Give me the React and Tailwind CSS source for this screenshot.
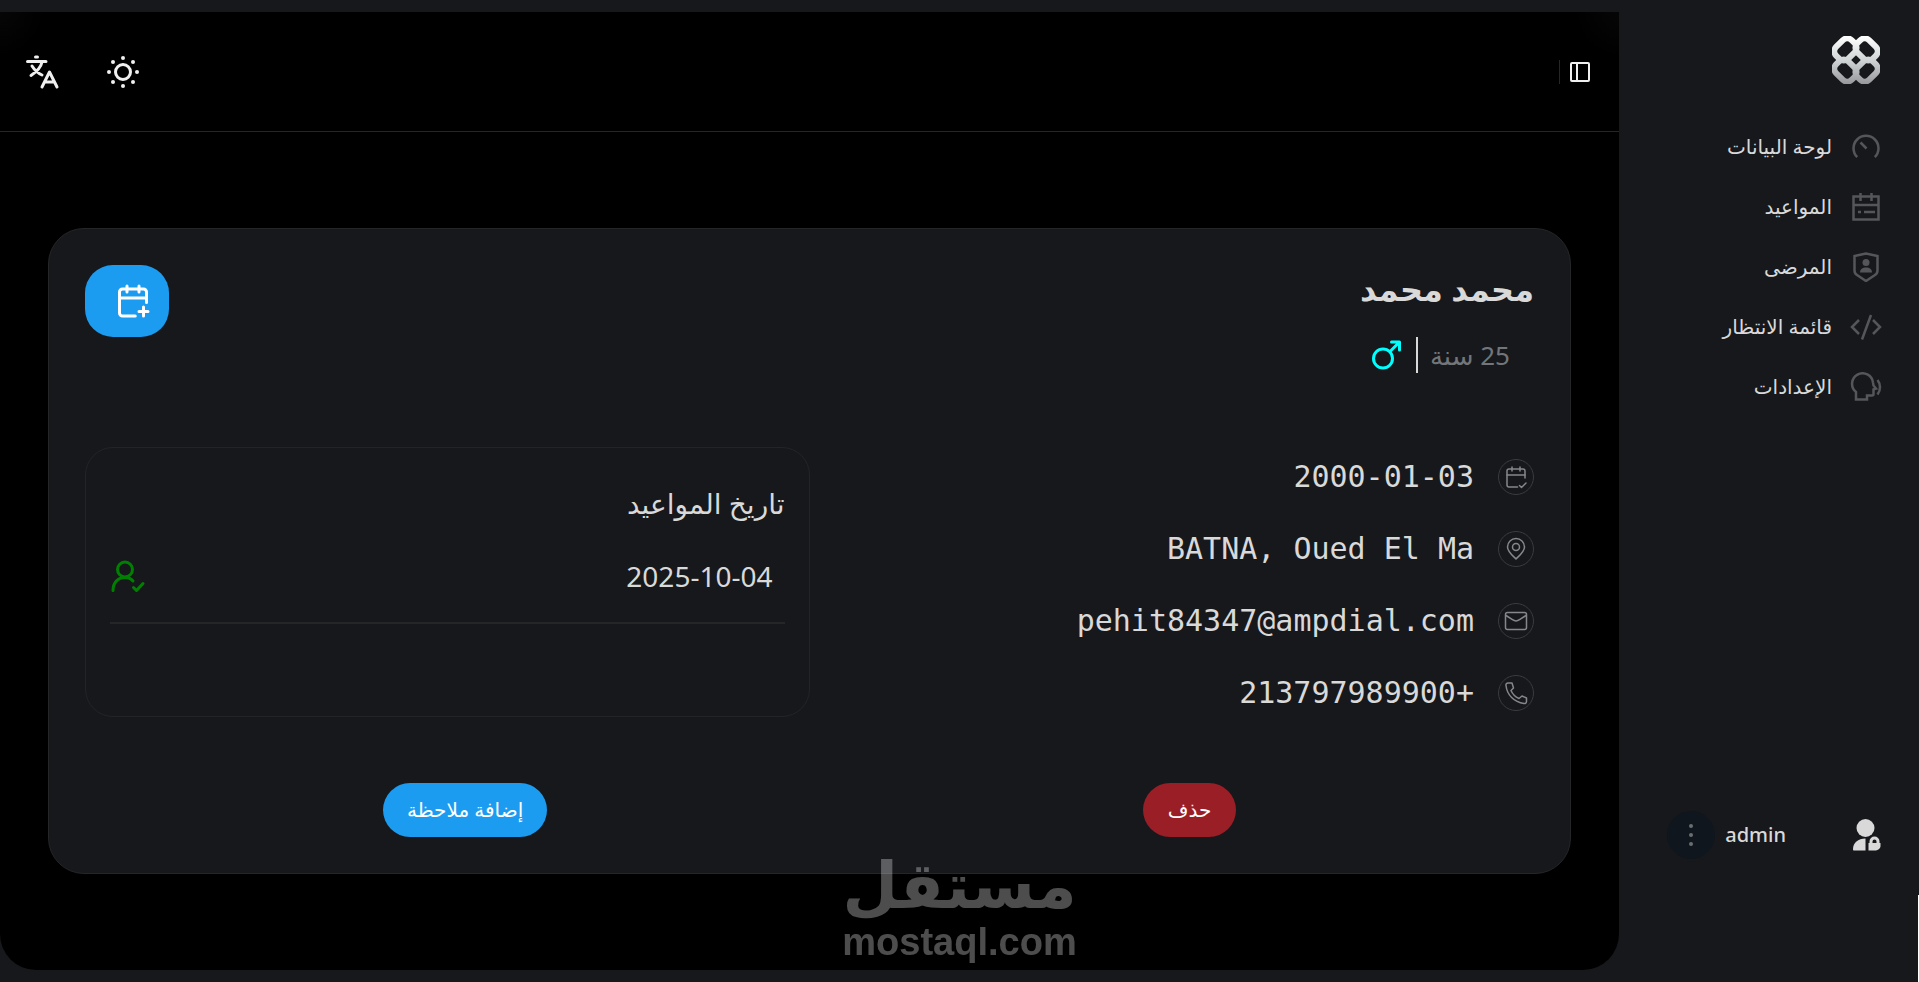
const stroke = {
  fill: "none",
  stroke: "currentColor",
  strokeLinecap: "round",
  strokeLinejoin: "round",
};

function Logo() {
  return (
    <svg viewBox="0 0 48 48" className="size-12" fill="none" aria-hidden="true">
      <defs>
        <linearGradient id="logoFade" x1="0" y1="0" x2="0" y2="48" gradientUnits="userSpaceOnUse">
          <stop offset="0" stopColor="#ffffff" />
          <stop offset="0.5" stopColor="#d0d5d6" />
          <stop offset="1" stopColor="#97979c" />
        </linearGradient>
        <mask id="logoRings" maskUnits="userSpaceOnUse" x="0" y="0" width="48" height="48">
          <g stroke="#fff" strokeWidth="6">
            <rect x="2.500" y="5" width="22" height="17" rx="6.500" transform="rotate(-45 13.500 13.500)" />
            <rect x="23.500" y="5" width="22" height="17" rx="6.500" transform="rotate(45 34.500 13.500)" />
            <rect x="2.500" y="26" width="22" height="17" rx="6.500" transform="rotate(45 13.500 34.500)" />
            <rect x="23.500" y="26" width="22" height="17" rx="6.500" transform="rotate(-45 34.500 34.500)" />
          </g>
        </mask>
      </defs>
      <rect width="48" height="48" fill="url(#logoFade)" mask="url(#logoRings)" />
    </svg>
  );
}

function GaugeIcon() {
  return (
    <svg viewBox="0 0 30 30" className="size-[30px]" fill="none" stroke="currentColor" strokeWidth="2.5" aria-hidden="true">
      <path d="M6.200 25.200a12.500 12.500 0 1 1 17.600 0" />
      <path d="M9.500 10.500l6 6" />
    </svg>
  );
}

function ScheduleIcon() {
  return (
    <svg viewBox="0 0 30 30" className="size-[30px]" fill="none" stroke="currentColor" strokeWidth="2.5" aria-hidden="true">
      <path d="M2.500 4.500h25v23h-25zM2.500 13h25M9.500 1v8M20.500 1v8" />
      <path d="M7 20h3M13 20h11" />
    </svg>
  );
}

function ShieldUserIcon() {
  return (
    <svg viewBox="0 0 30 30" className="size-[30px]" fill="none" stroke="currentColor" strokeWidth="2.5" aria-hidden="true">
      <path d="M15 1.500L3.500 4v14.500c0 2 1 3.500 2.500 4.500l9 6 9-6c1.500-1 2.500-2.500 2.500-4.500V4z" />
      <circle cx="15" cy="10.500" r="3.500" fill="currentColor" stroke="none" />
      <path d="M9 20.500c0-3.500 2.500-5 6-5s6 1.500 6 5z" fill="currentColor" stroke="none" />
    </svg>
  );
}

function CodeIcon() {
  return (
    <svg viewBox="0 0 32 30" className="h-[30px] w-8" fill="none" stroke="currentColor" strokeWidth="2.5" aria-hidden="true">
      <path d="M9 8l-7 7 7 7M23 8l7 7-7 7M21 3l-9 24.500" />
    </svg>
  );
}

function SpeakingIcon() {
  return (
    <svg viewBox="0 0 32 30" className="h-[30px] w-8" fill="none" stroke="currentColor" strokeWidth="2.5" aria-hidden="true">
      <path d="M6 27.500v-7.500a10.500 10.500 0 1 1 17-9.500l.5 3 2.500 3-2.500.8V22a1.500 1.500 0 0 1-1.500 1.500h-5v4z" />
      <path d="M27.500 8c1.500 2 2.500 4 2.500 7s-1 5.500-2.500 7.500" />
    </svg>
  );
}

function TranslateIcon() {
  return (
    <svg viewBox="0 0 36 36" className="size-9" {...stroke} strokeWidth="3" aria-hidden="true">
      <path d="M3.500 7.500h18.500M11.500 3h2M18 8c-1 5-5 9.500-11 13.500M8 12c2.500 4 5.500 7 10 9" />
      <path d="M18 33l7.500-15L33 33M20.500 28h10" />
    </svg>
  );
}

function SunIcon() {
  const rays = [
    [18, 4], [28, 8], [32, 18], [28, 28],
    [18, 32], [8, 28], [4, 18], [8, 8],
  ];

  return (
    <svg viewBox="0 0 36 36" className="size-9" fill="currentColor" aria-hidden="true">
      <circle cx="18" cy="18" r="7.500" fill="none" stroke="currentColor" strokeWidth="3" />
      {rays.map(([cx, cy]) => (
        <circle key={`${cx}-${cy}`} cx={cx} cy={cy} r="2" />
      ))}
    </svg>
  );
}

function PanelIcon() {
  return (
    <svg viewBox="0 0 24 24" className="size-6" {...stroke} strokeWidth="2" aria-hidden="true">
      <rect x="3" y="3" width="18" height="18" rx="1" />
      <path d="M9 3v18" />
    </svg>
  );
}

function CalendarIcon({ mark, className, width = 1.5 }) {
  return (
    <svg viewBox="0 0 24 24" className={className} {...stroke} strokeWidth={width} aria-hidden="true">
      <path d="M8 2v4M16 2v4M3 10h18" />
      <path d="M21 13V6a2 2 0 0 0-2-2H5a2 2 0 0 0-2 2v14a2 2 0 0 0 2 2h8.500" />
      <path d={mark === "plus" ? "M19 16v6M16 19h6" : "M15.500 20.500l2 2 4.500-4.500"} />
    </svg>
  );
}

function PinIcon() {
  return (
    <svg viewBox="0 0 24 24" className="size-6" {...stroke} strokeWidth="1.500" aria-hidden="true">
      <path d="M12 22C8 18 3.500 14.500 3.500 10a8.500 8.500 0 0 1 17 0c0 4.500-4.500 8-8.500 12z" />
      <circle cx="12" cy="10" r="3.500" />
    </svg>
  );
}

function MailIcon() {
  return (
    <svg viewBox="0 0 24 24" className="size-6" {...stroke} strokeWidth="1.500" aria-hidden="true">
      <rect x="1.500" y="3.500" width="21" height="17" rx="2" />
      <path d="M2 6.500l6.500 4.200c2.500 1.700 4.500 1.700 7 0L22 6.500" />
    </svg>
  );
}

function PhoneIcon() {
  return (
    <svg viewBox="0 0 24 24" className="size-6" {...stroke} strokeWidth="1.500" aria-hidden="true">
      <path d="M8 2H4a2 2 0 0 0-2 2.500C3 14 10 21 20 22.500a2 2 0 0 0 2.500-2V17l-4.500-2-3 2.500C11.500 16 8.500 13 7 9.500L9.500 7z" />
    </svg>
  );
}

function MaleIcon() {
  return (
    <svg viewBox="0 0 36 36" className="size-9" {...stroke} strokeWidth="3" aria-hidden="true">
      <circle cx="15" cy="21.500" r="9.500" />
      <path d="M22 14.500L31 5.500M23.500 5H31.500V13" />
    </svg>
  );
}

function UserCheckIcon() {
  return (
    <svg viewBox="0 0 36 36" className="size-9" {...stroke} strokeWidth="3" aria-hidden="true">
      <circle cx="15" cy="11.500" r="7.500" />
      <path d="M3 32.500c0-8 5-13 12-13 3.500 0 6 1 8 3.500M23.500 29.500l3 3 6.500-7" />
    </svg>
  );
}

function UserLockIcon() {
  return (
    <svg viewBox="0 0 32 36" className="h-9 w-8" fill="currentColor" aria-hidden="true">
      <circle cx="15.500" cy="11" r="9" />
      <path d="M15.500 21.500V33.500H4c-.700 0-1-.500-1-1.500 0-6 5-10.500 12.500-10.500z" />
      <path
        fillRule="evenodd"
        d="M18.500 26h1v-1.500a5 5 0 0 1 10 0V26h1v3c0 2.500-2.500 4.500-6 4.500h-6zM22.500 26h4v-1.500a2 2 0 0 0-4 0z"
      />
    </svg>
  );
}

const navItems = [
  { label: "لوحة البيانات", Icon: GaugeIcon },
  { label: "المواعيد", Icon: ScheduleIcon },
  { label: "المرضى", Icon: ShieldUserIcon },
  { label: "قائمة الانتظار", Icon: CodeIcon },
  { label: "الإعدادات", Icon: SpeakingIcon },
];

const details = [
  { text: "2000-01-03", icon: <CalendarIcon mark="check" className="size-6" /> },
  { text: "BATNA, Oued El Ma", icon: <PinIcon /> },
  { text: "pehit84347@ampdial.com", icon: <MailIcon /> },
  { text: "213797989900+", icon: <PhoneIcon /> },
];

function Sidebar() {
  return (
    <aside className="flex w-[300px] shrink-0 flex-col pt-9 pb-[123px]">
      <a href="#home" aria-label="Home" className="mr-[39px] self-start">
        <Logo />
      </a>

      <nav className="mt-[33px]">
        <ul>
          {navItems.map(({ label, Icon }) => (
            <li key={label}>
              <a href="#nav" className="flex h-[60px] items-center gap-[18px] pr-[37px] text-xl font-medium">
                <span className="flex w-8 justify-center text-[#555659]">
                  <Icon />
                </span>
                {label}
              </a>
            </li>
          ))}
        </ul>
      </nav>

      <div className="mt-auto flex items-center pr-[37px]">
        <UserLockIcon />
        <span className="mr-16 text-xl font-medium">admin</span>
        <button
          type="button"
          aria-label="More"
          className="mr-2.5 flex size-12 flex-col items-center justify-center gap-[5px] rounded-full bg-[#0f161e]"
        >
          <span className="size-1 rounded-full bg-[#6b6e71]" />
          <span className="size-1 rounded-full bg-[#6b6e71]" />
          <span className="size-1 rounded-full bg-[#6b6e71]" />
        </button>
      </div>
    </aside>
  );
}

function Header() {
  return (
    <header className="flex h-[120px] items-center justify-between border-b border-[#242628] bg-[radial-gradient(circle_at_top_left,#060606,transparent_44px),radial-gradient(circle_at_top_right,#060606,transparent_44px)] pr-[27px] pl-6 text-[#f0f0f0]">
      <div className="flex items-center gap-2">
        <button type="button" aria-label="Toggle sidebar">
          <PanelIcon />
        </button>
        <span className="h-6 w-px bg-[#242628]" />
      </div>

      <div className="flex items-center gap-[45px]">
        <button type="button" aria-label="Theme">
          <SunIcon />
        </button>
        <button type="button" aria-label="Language">
          <TranslateIcon />
        </button>
      </div>
    </header>
  );
}

function Appointments() {
  return (
    <section className="min-h-[270px] rounded-[28px] border border-[#222427] px-6 pt-8">
      <h2 className="text-[28px] leading-[46px] font-medium">تاريخ المواعيد</h2>
      <div className="mt-6 flex h-[74px] items-center justify-between border-b-2 border-[#242628] pb-5">
        <span className="pr-3 text-[28px] leading-9">2025-10-04</span>
        <span className="text-[#008000]">
          <UserCheckIcon />
        </span>
      </div>
    </section>
  );
}

function PatientCard() {
  return (
    <article className="rounded-[36px] border border-[#242628] bg-[#17181c] p-9">
      <div className="flex items-start justify-between">
        <div>
          <h1 className="text-[32px] leading-[48px] font-bold">محمد محمد</h1>
          <div className="mt-6 flex items-center gap-3 pr-6">
            <span className="text-[26px] leading-9 text-[#72767a]">25 سنة</span>
            <span className="h-9 w-0.5 bg-[#d9d9d9]" />
            <span className="text-[#00ffff]">
              <MaleIcon />
            </span>
          </div>
        </div>

        <button
          type="button"
          aria-label="إضافة موعد"
          className="flex h-[72px] w-21 items-center rounded-[28px] bg-[#1c9cf0] pr-[18px] text-white"
        >
          <CalendarIcon mark="plus" width={2} className="size-9" />
        </button>
      </div>

      <div className="mt-[74px] grid grid-cols-2">
        <ul className="flex flex-col gap-9 pt-3">
          {details.map(({ text, icon }) => (
            <li key={text} className="flex h-9 items-center gap-6">
              <span className="flex size-9 items-center justify-center rounded-full border border-[#3a3b3e] text-[#85878a]">
                {icon}
              </span>
              <span dir="ltr" className="font-['DejaVu_Sans_Mono',monospace] text-3xl">
                {text}
              </span>
            </li>
          ))}
        </ul>
        <Appointments />
      </div>

      <div className="mt-[66px] flex justify-around text-xl font-medium text-white">
        <button type="button" className="h-[54px] min-w-[93px] rounded-full bg-[#9a1e26] px-6">
          حذف
        </button>
        <button type="button" className="h-[54px] min-w-[164px] rounded-full bg-[#1c9cf0] px-6">
          إضافة ملاحظة
        </button>
      </div>
    </article>
  );
}

function Watermark() {
  return (
    <div className="pointer-events-none absolute inset-x-0 bottom-5 flex flex-col items-center gap-2 font-bold text-white opacity-30">
      <span className="text-[64px] leading-[60px]">مستقل</span>
      <span dir="ltr" className="font-['Liberation_Sans',sans-serif] text-[38px] leading-10">
        mostaql.com
      </span>
    </div>
  );
}

export default function App() {
  return (
    <div
      dir="rtl"
      className="relative flex min-h-screen overflow-hidden bg-[#17181c] font-['Noto_Sans','DejaVu_Sans',sans-serif] text-[#d9d9d9]"
    >
      <Sidebar />
      <div className="flex min-w-0 flex-1 flex-col py-3">
        <main className="flex-1 rounded-b-[36px] bg-black">
          <Header />
          <div className="px-12 py-24">
            <PatientCard />
          </div>
        </main>
      </div>
      <Watermark />
      <span className="absolute right-0 bottom-0 h-[87px] w-px bg-white" />
    </div>
  );
}
